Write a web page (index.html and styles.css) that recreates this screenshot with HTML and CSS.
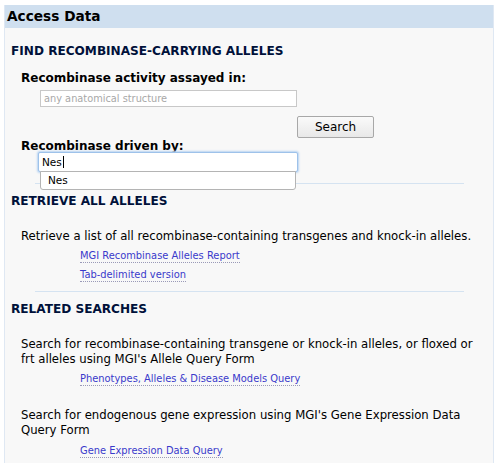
FILE: index.html
```html
<!DOCTYPE html>
<html>
<head>
<meta charset="utf-8">
<link rel="stylesheet" href="styles.css">
</head>
<body>
<div class="panel">
  <div class="panel-head">Access Data</div>
  <div class="panel-body">
    <h2 class="sec-title">FIND RECOMBINASE-CARRYING ALLELES</h2>
    <div class="field-label">Recombinase activity assayed in:</div>
    <div class="input-row"><input class="txt txt-system" type="text" placeholder="any anatomical structure"></div>
    <div class="btn-row"><button class="btn">Search</button></div>
    <div class="field-label label-driven">Recombinase driven by:</div>
    <div class="input-row ac-wrap">
      <div class="txt txt-focus">Nes<span class="caret"></span></div>
      <div class="ac-menu"><div class="ac-item">Nes</div></div>
    </div>
    <hr class="sep sep-first">
    <h2 class="sec-title">RETRIEVE ALL ALLELES</h2>
    <p class="desc desc-first">Retrieve a list of all recombinase-containing transgenes and knock-in alleles.</p>
    <div class="links">
      <a class="lnk" href="#">MGI Recombinase Alleles Report</a>
      <a class="lnk" href="#">Tab-delimited version</a>
    </div>
    <hr class="sep">
    <h2 class="sec-title">RELATED SEARCHES</h2>
    <p class="desc desc-first">Search for recombinase-containing transgene or knock-in alleles, or floxed or frt alleles using MGI's Allele Query Form</p>
    <div class="links"><a class="lnk" href="#">Phenotypes, Alleles &amp; Disease Models Query</a></div>
    <p class="desc desc-next">Search for endogenous gene expression using MGI's Gene Expression Data Query Form</p>
    <div class="links links-last"><a class="lnk" href="#">Gene Expression Data Query</a></div>
  </div>
</div>
</body>
</html>
```

FILE: styles.css
```css
html, body {
  margin: 0;
  padding: 0;
  background: #ffffff;
}
body {
  font-family: "DejaVu Sans", Verdana, sans-serif;
  color: #000;
}
.panel {
  margin: 5px 0 0 4px;
  width: 488px;
  border-left: 1px solid #dfe8f3;
  border-right: 1px solid #dfe8f3;
  background: #f8f8f8;
  min-height: 480px;
}
.panel-head {
  background: #cfdfef;
  height: 23px;
  line-height: 23px;
  font-size: 13.7px;
  font-weight: bold;
  padding-left: 2px;
  color: #000;
}
.panel-body {
  padding: 16px 0 0 6px;
}
.sec-title {
  margin: 0;
  font-size: 12.1px;
  font-weight: bold;
  color: #00113a;
  line-height: 14px;
}
.field-label {
  margin: 12px 0 0 10px;
  font-size: 12px;
  font-weight: bold;
  line-height: 16px;
}
.input-row {
  margin: 4px 0 0 29px;
}
.txt {
  box-sizing: border-box;
  display: block;
  width: 257px;
  height: 17px;
  border: 1px solid #c8c8c8;
  background: #fff;
  font-family: "DejaVu Sans", Verdana, sans-serif;
  font-size: 9.8px;
  padding: 0 3px;
  margin: 0;
}
.txt-system::placeholder {
  color: #a8a8a8;
}
.btn-row {
  margin: 9px 0 0 286px;
}
.btn {
  box-sizing: border-box;
  width: 77px;
  height: 22px;
  border: 1px solid #a8a8a8;
  border-radius: 2px;
  background: linear-gradient(#fafafa, #e8e8e8);
  font-family: "DejaVu Sans", Verdana, sans-serif;
  font-size: 12px;
  color: #000;
  padding: 0;
}
.label-driven {
  margin-top: 0;
}
.ac-wrap {
  position: relative;
  margin-left: 27px;
  margin-top: -2px;
}
.txt-focus {
  width: 260px;
  height: 20px;
  line-height: 18px;
  font-size: 10.5px;
  border: 1px solid #9ec2ea;
  border-radius: 2px;
  box-shadow: 0 0 2px 1px #b9d4f2;
  padding: 0 3px;
}
.caret {
  display: inline-block;
  width: 1px;
  height: 12px;
  background: #000;
  vertical-align: -2px;
  margin-left: 1px;
}
.ac-menu {
  position: absolute;
  left: 2px;
  top: 19px;
  width: 256px;
  box-sizing: border-box;
  border: 1px solid #b4b4b4;
  border-radius: 0 0 3px 3px;
  background: #fff;
  z-index: 2;
}
.ac-item {
  font-size: 10.5px;
  line-height: 17px;
  padding-left: 7px;
}
.sep {
  border: 0;
  height: 1px;
  background: #d5e3f1;
  margin: 9px 0 0 24px;
  width: 429px;
}
.sep-first {
  margin-top: 11px;
}
.sep + .sec-title {
  margin-top: 10px;
}
.desc {
  font-size: 11.7px;
  line-height: 15px;
  margin: 0 8px 0 10px;
}
.desc-first {
  margin-top: 21px;
}
.desc-next {
  margin-top: 22px;
}
.links {
  margin: 6px 0 0 69px;
  display: flex;
  flex-direction: column;
  align-items: flex-start;
  gap: 6px;
}
.links-last {
  margin-top: 7px;
}
.lnk {
  font-size: 9.9px;
  color: #3a3acb;
  text-decoration: none;
  border-bottom: 1px dotted #9a9ab8;
  line-height: 12px;
}
```
